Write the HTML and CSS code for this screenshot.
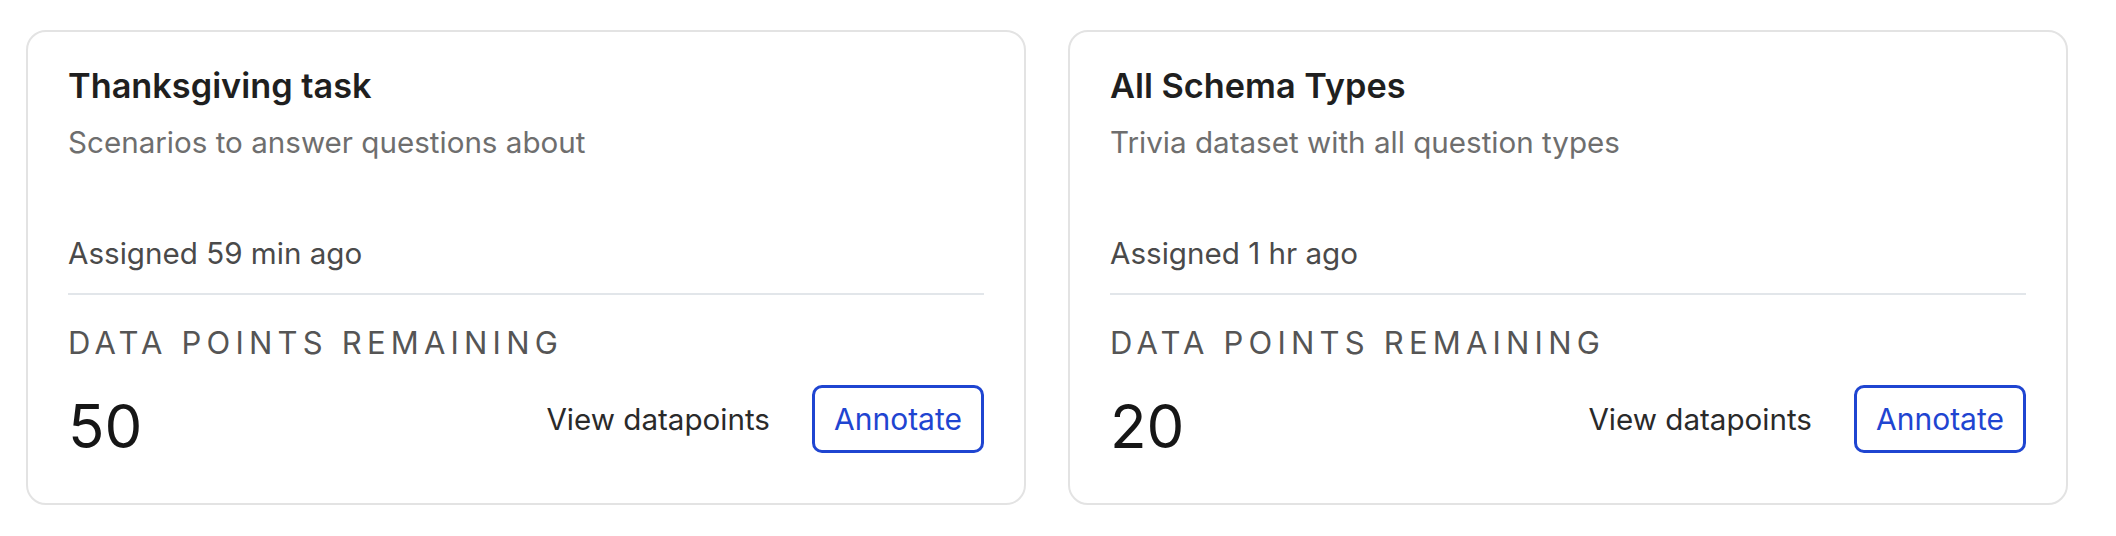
FILE: index.html
```html
<!DOCTYPE html>
<html lang="en">
<head>
<meta charset="utf-8">
<title>Tasks</title>
<link rel="stylesheet" href="styles.css">
</head>
<body>
<main class="grid">
  <section class="card">
    <h2 class="title">Thanksgiving task</h2>
    <p class="desc">Scenarios to answer questions about</p>
    <p class="assigned">Assigned 59 min ago</p>
    <hr class="divider">
    <div class="label">DATA POINTS REMAINING</div>
    <div class="row">
      <div class="count">50</div>
      <div class="actions">
        <a class="link">View datapoints</a>
        <button class="btn">Annotate</button>
      </div>
    </div>
  </section>
  <section class="card">
    <h2 class="title">All Schema Types</h2>
    <p class="desc">Trivia dataset with all question types</p>
    <p class="assigned">Assigned 1 hr ago</p>
    <hr class="divider">
    <div class="label">DATA POINTS REMAINING</div>
    <div class="row">
      <div class="count">20</div>
      <div class="actions">
        <a class="link">View datapoints</a>
        <button class="btn">Annotate</button>
      </div>
    </div>
  </section>
</main>
</body>
</html>
```
FILE: styles.css
```css
* { box-sizing: border-box; }
html, body { margin: 0; background: #ffffff; }
body {
  font-family: Inter, "Noto Sans", "Liberation Sans", sans-serif;
  padding: 30px 48px 0 26px;
}
.grid {
  display: grid;
  grid-template-columns: 1fr 1fr;
  column-gap: 42px;
}
.card {
  border: 2px solid #e3e3e3;
  border-radius: 20px;
  padding: 33px 40px 50px 40px;
  display: flex;
  flex-direction: column;
}
.title {
  margin: 0;
  font-size: 34.3px;
  line-height: 41px;
  font-weight: 600;
  color: #1f1f1f;
}
.desc {
  margin: 19px 0 0 0;
  font-size: 29.6px;
  line-height: 35px;
  color: #6e6e6e;
}
.assigned {
  margin: 76px 0 0 0;
  font-size: 29.6px;
  line-height: 35px;
  color: #4a4a4a;
}
.divider {
  margin: 22px 0 0 0;
  border: 0;
  height: 2px;
  background: #e2e6ea;
}
.label {
  margin-top: 30px;
  font-size: 31px;
  line-height: 35px;
  letter-spacing: 5.2px;
  color: #555555;
}
.row {
  margin-top: 25px;
  display: flex;
  align-items: flex-start;
  justify-content: space-between;
  height: 68px;
}
.count {
  margin-top: 11px;
  font-size: 60px;
  line-height: 60px;
  color: #161616;
}
.actions {
  display: flex;
  align-items: center;
  gap: 42px;
  height: 68px;
}
.link {
  font-size: 29.6px;
  color: #2a2a2a;
  cursor: pointer;
}
.btn {
  font-family: inherit;
  font-size: 30px;
  color: #1f45d1;
  background: #ffffff;
  border: 3px solid #1f45d1;
  border-radius: 10px;
  width: 172px;
  height: 68px;
  padding: 0;
}
```
